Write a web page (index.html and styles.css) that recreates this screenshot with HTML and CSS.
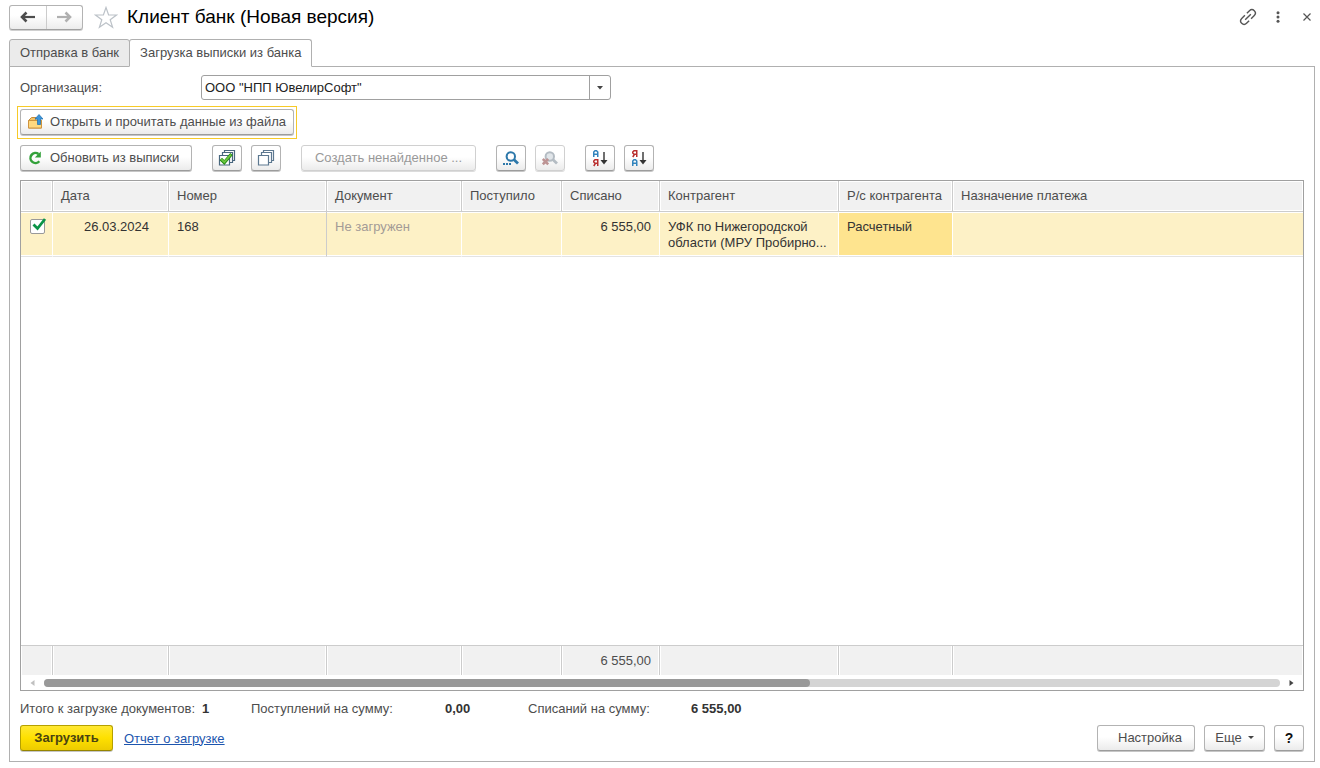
FILE: index.html
```html
<!DOCTYPE html>
<html lang="ru">
<head>
<meta charset="utf-8">
<title>Клиент банк (Новая версия)</title>
<link rel="stylesheet" href="styles.css">
</head>
<body>
<header class="titlebar">
  <div class="nav">
    <button class="nav-btn" aria-label="Назад"><svg width="16" height="12" viewBox="0 0 16 12"><path d="M2 6H15" stroke="#4d4d4d" stroke-width="2.200"/><path d="M6.500 1.500L2 6L6.500 10.500" fill="none" stroke="#4d4d4d" stroke-width="2.600"/></svg></button>
    <button class="nav-btn" aria-label="Вперед"><svg width="16" height="12" viewBox="0 0 16 12"><path d="M1 6H14" stroke="#b0b0b0" stroke-width="2.200"/><path d="M9.500 1.500L14 6L9.500 10.500" fill="none" stroke="#b0b0b0" stroke-width="2.600"/></svg></button>
  </div>
  <button class="plain star" aria-label="В избранное"><svg width="24" height="23" viewBox="0 0 24 23"><path d="M12 1.500L14.600 9H22.500L16.200 13.700L18.600 21.300L12 16.700L5.400 21.300L7.800 13.700L1.500 9H9.400Z" fill="#fff" stroke="#bcc2c8" stroke-width="1.200"/></svg></button>
  <h1>Клиент банк (Новая версия)</h1>
  <div class="window-tools">
    <button class="plain" aria-label="Ссылка"><svg width="18" height="18" viewBox="0 0 18 18"><g fill="none" stroke="#555" stroke-width="1.400" transform="rotate(-45 9 9)"><path d="M8 5.600H3.500A3.400 3.400 0 0 0 3.500 12.400H7.200M10.800 5.600H14.500A3.400 3.400 0 0 1 14.500 12.400H10M5 9H13"/></g></svg></button>
    <button class="plain" aria-label="Меню"><svg width="4" height="12" viewBox="0 0 4 12"><g fill="#555"><circle cx="2" cy="1.700" r="1.500"/><circle cx="2" cy="6" r="1.500"/><circle cx="2" cy="10.300" r="1.500"/></g></svg></button>
    <button class="plain close" aria-label="Закрыть"><svg width="8" height="8" viewBox="0 0 8 8"><path d="M.5 .5L7.500 7.500M7.500 .5L.5 7.500" stroke="#555" stroke-width="1.200"/></svg></button>
  </div>
</header>
<nav class="tabs">
  <button class="tab">Отправка в банк</button>
  <button class="tab active">Загрузка выписки из банка</button>
</nav>
<main class="panel">
  <div class="field">
    <label for="org">Организация:</label>
    <div class="combo">
      <input id="org" type="text" value='ООО "НПП ЮвелирСофт"'>
      <button aria-label="Выбрать"><svg width="6" height="4" viewBox="0 0 6 4"><path d="M0 0H6L3 3.500Z" fill="#444"/></svg></button>
    </div>
  </div>
  <div class="highlight">
    <button class="btn with-icon open">
      <svg width="16" height="16" viewBox="0 0 16 16"><path d="M1.500 14V6.500L4.500 3.500H9V6.500H14.500V14Z" fill="#f3c162" stroke="#c48a3a"/><path d="M1.500 6.500H14.500V14H1.500Z" fill="#ffd980" stroke="#cf943e"/><path d="M12 .5L16 5H13.500V10.500H10.500V5H8Z" fill="#3b94da" stroke="#1d6eae" stroke-width=".7"/></svg>
      Открыть и прочитать данные из файла</button>
  </div>
  <div class="toolbar">
    <button class="btn with-icon refresh">
      <svg width="16" height="16" viewBox="0 0 16 16"><path d="M11.500 4A5 5 0 1 0 12.300 11.200" fill="none" stroke="#33a13a" stroke-width="2.500"/><path d="M13.800 1.500V7.500H7.800Z" fill="#33a13a"/></svg>
      Обновить из выписки</button>
    <div class="group">
      <button class="btn icon" aria-label="Отметить все"><svg width="18" height="16" viewBox="0 0 18 16"><g fill="#fff" stroke="#49677f" stroke-width="1.200"><path d="M6.500 .5H16.500V10.500H6.500Z"/><path d="M4.500 2.500H14.500V12.500H4.500Z"/><path d="M1.500 5.500H11.500V15H1.500Z"/></g><path d="M2.800 9L6.300 12.500L13.500 4" fill="none" stroke="#258a15" stroke-width="3.400"/><path d="M3.200 9.200L6.300 12.200L13 4.500" fill="none" stroke="#6cc83f" stroke-width="1.800"/></svg></button>
      <button class="btn icon" aria-label="Снять отметки"><svg width="18" height="16" viewBox="0 0 18 16"><g fill="#fff" stroke="#5d7890" stroke-width="1.200"><path d="M6.500 .5H16.500V10.500H6.500Z"/><path d="M4.500 2.500H14.500V12.500H4.500Z"/><path d="M1.500 5.500H11.500V15H1.500Z"/></g></svg></button>
    </div>
    <button class="btn create" disabled>Создать ненайденное ...</button>
    <div class="group">
      <button class="btn icon" aria-label="Найти"><svg width="16" height="16" viewBox="0 0 16 16"><circle cx="7.800" cy="6.500" r="4.200" fill="#fff" stroke="#2d78aa" stroke-width="2"/><path d="M10.800 9.500L15 13.500" stroke="#2d78aa" stroke-width="2.800"/><path d="M0 13H2V15H0ZM3 13H5V15H3ZM6 13H8V15H6Z" fill="#2d78aa"/></svg></button>
      <button class="btn icon" aria-label="Отменить поиск" disabled><svg width="16" height="16" viewBox="0 0 16 16"><circle cx="7.800" cy="6.500" r="4.200" fill="#e0e5e9" stroke="#b4bcc3" stroke-width="2"/><path d="M10.800 9.500L15 13.500" stroke="#b4bcc3" stroke-width="2.800"/><path d="M.8 9L6.200 14.400M6.200 9L.8 14.400" stroke="#bd9494" stroke-width="2.600"/></svg></button>
    </div>
    <div class="group">
      <button class="btn icon" aria-label="Сортировать по возрастанию"><svg width="16" height="18" viewBox="0 0 16 18"><path d="M1.750 8V3L3 1.750H4.500L5.750 3V8M2 5.250H5.500" fill="none" stroke="#3284bd" stroke-width="1.500"/><path d="M5.750 17V10.750H3L1.750 12V13L3 14.250H5.500M3.500 14.250L1.750 17" fill="none" stroke="#b92f2f" stroke-width="1.500"/><path d="M12 3V14" stroke="#333" stroke-width="1.400"/><path d="M8.500 11H15.500L12 15.500Z" fill="#333"/></svg></button>
      <button class="btn icon" aria-label="Сортировать по убыванию"><svg width="16" height="18" viewBox="0 0 16 18"><path d="M1.750 17V12L3 10.750H4.500L5.750 12V17M2 14.250H5.500" fill="none" stroke="#3284bd" stroke-width="1.500"/><path d="M5.750 8V1.750H3L1.750 3V4L3 5.250H5.500M3.500 5.250L1.750 8" fill="none" stroke="#b92f2f" stroke-width="1.500"/><path d="M12 3V14" stroke="#333" stroke-width="1.400"/><path d="M8.500 11H15.500L12 15.500Z" fill="#333"/></svg></button>
    </div>
  </div>
  <div class="grid">
    <table>
      <colgroup><col class="c-mark"><col class="c-date"><col class="c-num"><col class="c-doc"><col class="c-in"><col class="c-out"><col class="c-party"><col class="c-acc"><col></colgroup>
      <thead><tr><th></th><th>Дата</th><th>Номер</th><th>Документ</th><th>Поступило</th><th>Списано</th><th>Контрагент</th><th>Р/с контрагента</th><th>Назначение платежа</th></tr></thead>
      <tbody>
        <tr class="row">
          <td class="mark"><label class="check"><input type="checkbox" checked aria-label="Загружать"><svg width="18" height="17" viewBox="0 0 18 17"><path d="M3.500 7.500L7.500 11.500L15 2" fill="none" stroke="#0b9447" stroke-width="2.800"/></svg></label></td>
          <td class="date">26.03.2024</td><td>168</td><td class="muted">Не загружен</td><td></td><td class="num">6 555,00</td>
          <td><div class="clamp">УФК по Нижегородской<br>области (МРУ Пробирно...</div></td><td class="current">Расчетный</td><td></td>
        </tr>
        <tr class="filler"><td colspan="9"></td></tr>
      </tbody>
      <tfoot><tr><td></td><td></td><td></td><td></td><td></td><td class="num">6 555,00</td><td></td><td></td><td></td></tr></tfoot>
    </table>
    <div class="scroll">
      <svg width="5" height="6" viewBox="0 0 5 6"><path d="M4.500 0V6L.5 3Z" fill="#c0c0c0"/></svg>
      <div class="track"><div class="thumb"></div></div>
      <svg width="5" height="6" viewBox="0 0 5 6"><path d="M.5 0V6L4.500 3Z" fill="#444"/></svg>
    </div>
  </div>
  <div class="totals">
    <span class="t-count">Итого к загрузке документов:</span><b class="v-count">1</b>
    <span class="t-in">Поступлений на сумму:</span><b class="v-in">0,00</b>
    <span class="t-out">Списаний на сумму:</span><b class="v-out">6 555,00</b>
  </div>
  <footer class="actions">
    <button class="btn primary">Загрузить</button>
    <a href="#">Отчет о загрузке</a>
    <div class="right">
      <button class="btn settings">Настройка</button>
      <button class="btn more">Еще <svg width="6" height="4" viewBox="0 0 6 4"><path d="M0 0H6L3 3Z" fill="#444"/></svg></button>
      <button class="btn icon help">?</button>
    </div>
  </footer>
</main>
</body>
</html>
```
FILE: styles.css
```css
* { box-sizing: border-box; }
body {
  margin: 0; min-height: 100vh; padding: 4px 5px 6px 9px;
  display: flex; flex-direction: column;
  font: 13px/16px "Liberation Sans", Arial, sans-serif; color: #4d4d4d; background: #fff;
}
button, input { font: inherit; color: inherit; }
button { margin: 0; padding: 0; }
svg { display: block; flex: none; }
.titlebar { display: flex; align-items: center; height: 26px; }
.nav {
  display: flex; width: 74px; height: 25px; border: 1px solid #b3b3b3; border-bottom-color: #a0a0a0; border-radius: 3px;
  background: linear-gradient(#fff 40%, #ececec); box-shadow: 0 1px #d0d0d0;
}
.nav-btn { flex: 1; display: flex; align-items: center; justify-content: center; border: 0; background: none; }
.nav-btn + .nav-btn { border-left: 1px solid #ccc; }
.plain { border: 0; background: none; }
.star { margin-left: 11px; }
h1 { margin: 0 0 0 9px; font-size: 19px; line-height: 24px; font-weight: 400; color: #000; }
.window-tools { margin-left: auto; display: flex; align-items: center; gap: 19px; padding-right: 4px; }
.close { margin-left: 4px; }
.tabs { display: flex; margin-top: 9px; height: 28px; position: relative; z-index: 1; margin-bottom: -1px; }
.tab { height: 28px; padding: 0 10px; border: 1px solid #b0b0b0; border-radius: 3px 3px 0 0; background: #ebebeb; }
.tab.active { margin-left: -1px; background: #fff; border-bottom-color: #fff; }
.panel { flex: 1; display: flex; flex-direction: column; border: 1px solid #b0b0b0; padding: 8px 10px 9px; }
.field { display: flex; align-items: center; height: 25px; }
.field label { width: 181px; }
.combo { display: flex; width: 410px; height: 25px; border: 1px solid #a0a0a0; border-radius: 3px; color: #222; }
.combo input { flex: 1; min-width: 0; border: 0; padding: 0 3px; outline: 0; background: none; }
.combo button { width: 21px; display: flex; align-items: center; justify-content: center; border: 0; border-left: 1px solid #a0a0a0; background: none; }
.highlight { align-self: flex-start; margin: 6px 0 0 -3px; padding: 2px; border: 1px solid #f7ca28; }
.btn {
  height: 26px; margin-bottom: 1px; display: flex; align-items: center; justify-content: center;
  border: 1px solid #b3b3b3; border-bottom-color: #9c9c9c; border-radius: 3px;
  background: linear-gradient(#fff 45%, #ebebeb); box-shadow: 0 1px #c6c6c6; white-space: nowrap;
}
.btn:disabled { border-color: #d0d0d0; color: #999; box-shadow: 0 1px #dcdcdc; }
.with-icon { justify-content: flex-start; padding-left: 6px; gap: 7px; }
.open { width: 274px; }
.refresh { width: 172px; }
.icon { width: 30px; }
.create { width: 175px; }
.toolbar { display: flex; gap: 20px; margin-top: 6px; }
.group { display: flex; gap: 9px; }
.grid { flex: 1; display: flex; flex-direction: column; margin-top: 8px; border: 1px solid #a0a0a0; }
table { flex: 1; width: 100%; table-layout: fixed; border-collapse: separate; border-spacing: 0; }
.c-mark { width: 32px; } .c-date { width: 116px; } .c-num { width: 158px; } .c-doc { width: 135px; }
.c-in { width: 100px; } .c-out { width: 98px; } .c-party { width: 179px; } .c-acc { width: 114px; }
th, td { padding: 0 8px; text-align: left; font-weight: 400; }
th { height: 31px; background: #f1f1f1; border-right: 1px solid #ccc; border-bottom: 1px solid #ccc; box-shadow: inset 0 0 0 1px #fff; }
th:last-child, tfoot td:last-child, .row td:last-child { border-right: 0; }
.row td { height: 45px; padding-top: 7px; vertical-align: top; background: #fdf1c6; border-right: 1px solid #fff; border-bottom: 1px solid #e3e3e3; box-shadow: inset 0 1px #fff, inset 0 -1px #fff; color: #333; }
.row .muted { color: #a39b96; }
.row td:nth-child(3) { border-right-color: #ccc; }
.row .current { background: #fee48f; }
.row .date, .num { text-align: right; }
.row .date { padding-right: 19px; }
.row .mark { padding: 5px 0 0 9px; }
.check { display: block; position: relative; width: 18px; height: 18px; }
.check input { appearance: none; position: absolute; left: 0; top: 2px; width: 15px; height: 15px; margin: 0; border: 1px solid #999; border-radius: 2px; background: #fff; }
.check svg { position: absolute; left: 0; top: 0; }
.clamp { white-space: nowrap; }
.filler td { padding: 0; }
tfoot td { height: 30px; background: #f1f1f1; border-top: 1px solid #ccc; border-right: 1px solid #ccc; box-shadow: inset 1px 0 #fff, inset -1px 0 #fff; }
.scroll { display: flex; align-items: center; gap: 9px; height: 15px; padding: 0 9px; }
.track { flex: 1; height: 8px; border-radius: 4px; background: #d4d4d4; }
.thumb { width: 62%; height: 8px; border-radius: 4px; background: #999; }
.totals { display: flex; margin-top: 9px; height: 17px; align-items: center; }
.totals b { color: #333; }
.t-count { width: 182px; } .v-count { width: 49px; } .t-in { width: 194px; } .v-in { width: 83px; } .t-out { width: 163px; }
.actions { display: flex; align-items: center; margin-top: 8px; }
.primary { width: 93px; margin-right: 11px; font-weight: 700; color: #4a4312; border-color: #b5a000; border-bottom-color: #958400; background: linear-gradient(#ffe833, #fee000 50%, #eccb00); }
a { color: #1c55ae; }
.right { display: flex; gap: 9px; margin-left: auto; }
.settings { width: 98px; padding-left: 8px; }
.more { width: 61px; gap: 6px; }
.help { color: #111; font-weight: 700; font-size: 14px; }
```
